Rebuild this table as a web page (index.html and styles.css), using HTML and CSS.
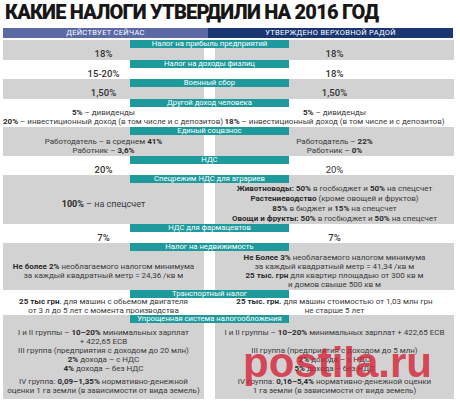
FILE: index.html
```html
<!DOCTYPE html>
<html lang="ru">
<head>
<meta charset="utf-8">
<title>Какие налоги утвердили на 2016 год</title>
<link rel="stylesheet" href="styles.css">
</head>
<body>
<div class="page">
  <h1 class="title">КАКИЕ НАЛОГИ УТВЕРДИЛИ НА 2016 ГОД</h1>
  <div class="head">
    <div class="head-now">ДЕЙСТВУЕТ СЕЙЧАС</div>
    <div class="head-rada">УТВЕРЖДЕНО ВЕРХОВНОЙ РАДОЙ</div>
  </div>

  <section class="row gray single pb1">
    <div class="label">Налог на прибыль предприятий</div>
    <div class="cell now"><div class="val">18%</div></div>
    <div class="cell rada"><div class="val">18%</div></div>
  </section>

  <section class="row single">
    <div class="label">Налог на доходы физлиц</div>
    <div class="cell now"><div class="val">15-20%</div></div>
    <div class="cell rada"><div class="val">18%</div></div>
  </section>

  <section class="row gray single pb1">
    <div class="label">Военный сбор</div>
    <div class="cell now"><div class="val">1,50%</div></div>
    <div class="cell rada"><div class="val">1,50%</div></div>
  </section>

  <section class="row r4">
    <div class="label">Другой доход человека</div>
    <div class="cell now txt">
      <div><b>5%</b> – дивиденды</div>
      <div><b>20%</b> – инвестиционный доход (в том числе и с депозитов)</div>
    </div>
    <div class="cell rada txt">
      <div><b>5%</b> – дивиденды</div>
      <div><b>18%</b> – инвестиционный доход (в том числе и с депозитов)</div>
    </div>
  </section>

  <section class="row gray r5">
    <div class="label">Единый соцвзнос</div>
    <div class="cell now txt">
      <div>Работодатель – в среднем <b>41%</b></div>
      <div>Работник – <b>3,6%</b></div>
    </div>
    <div class="cell rada txt">
      <div>Работодатель – <b>22%</b></div>
      <div>Работник – <b>0%</b></div>
    </div>
  </section>

  <section class="row single">
    <div class="label">НДС</div>
    <div class="cell now"><div class="val">20%</div></div>
    <div class="cell rada"><div class="val light">20%</div></div>
  </section>

  <section class="row gray r7">
    <div class="label">Спецрежим НДС для аграриев</div>
    <div class="cell now txt big"><div><b>100%</b> – на спецсчет</div></div>
    <div class="cell rada txt">
      <div><b>Животноводы:</b> <b>50%</b> в госбюджет и <b>50%</b> на спецсчет</div>
      <div><b>Растениеводство</b> (кроме овощей и фруктов)</div>
      <div><b>85%</b> в бюджет и <b>15%</b> на спецсчет</div>
      <div><b>Овощи и фрукты:</b> <b>50%</b> в госбюджет и <b>50%</b> на спецсчет</div>
    </div>
  </section>

  <section class="row single">
    <div class="label">НДС для фармацевтов</div>
    <div class="cell now"><div class="val">7%</div></div>
    <div class="cell rada"><div class="val">7%</div></div>
  </section>

  <section class="row gray r9">
    <div class="label">Налог на недвижимость</div>
    <div class="cell now txt">
      <div><b>Не более 2%</b> необлагаемого налогом минимума</div>
      <div>за каждый квадратный метр = 24,36 /кв м</div>
    </div>
    <div class="cell rada txt">
      <div><b>Не Более 3%</b> необлагаемого налогом минимума</div>
      <div>за каждый квадратный метр = 41,34 /кв м</div>
      <div><b>25 тыс. грн</b> для квартир площадью от 300 кв м</div>
      <div>и домов свыше 500 кв м</div>
    </div>
  </section>

  <section class="row r10">
    <div class="label">Транспортный налог</div>
    <div class="cell now txt">
      <div><b>25 тыс грн</b>. для машин с обьемом двигателя</div>
      <div>от 3 л до 5 лет с момента производства</div>
    </div>
    <div class="cell rada txt">
      <div><b>25 тыс. грн.</b> для машин стоимостью от 1,03 млн грн</div>
      <div>не старше 5 лет</div>
    </div>
  </section>

  <section class="row gray r11">
    <div class="label">Упрощенная система налогообложения</div>
    <div class="cell now txt">
      <div class="grp1">
        <div>I и II группы – <b>10–20%</b> минимальных зарплат</div>
        <div>+ 422,65 ЕСВ</div>
      </div>
      <div>III группа (предприятия с доходом до 20 млн)</div>
      <div><b>2%</b> дохода – с НДС</div>
      <div><b>4%</b> дохода – без НДС</div>
      <div class="grp4">
        <div>IV группа: <b>0,09–1,35%</b> нормативно-денежной</div>
        <div>оценки 1 га земли (в зависимости от вида земель)</div>
      </div>
    </div>
    <div class="cell rada txt">
      <div class="grp1">
        <div>I и II группы – <b>10–20%</b> минимальных зарплат + 422,65 ЕСВ</div>
      </div>
      <div>III группа (предприятия с доходом до 5 млн)</div>
      <div><b>2%</b> дохода – с НДС</div>
      <div><b>5%</b> дохода – без НДС</div>
      <div class="grp4">
        <div>IV группа: <b>0,16–5,4%</b> нормативно-денежной оценки</div>
        <div>1 га земли (в зависимости от вида земель)</div>
      </div>
    </div>
  </section>
</div>
<div class="watermark">postila.ru</div>
</body>
</html>
```

FILE: styles.css
```css
html, body {
  margin: 0;
  padding: 0;
  background: #ffffff;
}

body {
  width: 460px;
  height: 407px;
  overflow: hidden;
  font-family: Roboto, "Noto Sans", "Liberation Sans", sans-serif;
  color: #343434;
}

.page {
  padding: 0 6px 0 3px;
}

.title {
  margin: 0;
  padding: 0 0 4px 2px;
  font-size: 20px;
  line-height: 24px;
  font-weight: 900;
  letter-spacing: -0.8px;
  color: #171717;
  white-space: nowrap;
}

.head {
  display: flex;
  height: 10px;
  margin-bottom: 2px;
  color: #ffffff;
  font-size: 7.5px;
  line-height: 10px;
  letter-spacing: 0.3px;
  text-align: center;
}

.head-now {
  width: 205px;
  background: #5b69a7;
}

.head-rada {
  width: 245px;
  background: #1b3773;
}

.row {
  display: grid;
  grid-template-columns: 201px 239px;
  grid-template-rows: 8px auto;
  column-gap: 11px;
}

.label {
  grid-column: 1 / 3;
  grid-row: 1;
  justify-self: start;
  margin-left: 127px;
  width: 159px;
  height: 8px;
  background: #1e9a9c;
  color: #ffffff;
  font-size: 7.7px;
  line-height: 8px;
  text-align: center;
  white-space: nowrap;
  z-index: 1;
}

.cell {
  grid-row: 1 / 3;
  padding-top: 8px;
  display: flex;
  flex-direction: column;
  justify-content: center;
  text-align: center;
  white-space: nowrap;
}

.cell.now {
  grid-column: 1;
}

.cell.rada {
  grid-column: 2;
}

.gray .cell {
  background: #d2d2d2;
}

.val {
  font-size: 9.5px;
  line-height: 11px;
  font-weight: 500;
  color: #333333;
}

.val.light {
  font-weight: 400;
}

.txt {
  font-size: 8px;
  line-height: 9px;
  color: #3a3a3a;
}

.txt b {
  font-weight: 700;
  color: #2a2a2a;
}

.txt.big {
  font-size: 9px;
}

.pb1 .cell {
  padding-bottom: 1px;
}

.r4 .cell {
  padding-top: 9px;
  padding-bottom: 1px;
}

.r5 .cell {
  padding-top: 10px;
  padding-bottom: 1px;
}

.r7 .cell {
  padding-top: 9px;
}

.r7 .txt {
  line-height: 10px;
}

.r9 .cell {
  padding-top: 10px;
  padding-bottom: 1px;
}

.r10 .txt {
  line-height: 8.5px;
}

.r10 .cell {
  justify-content: flex-start;
}

.r11 .cell {
  padding-top: 13px;
  padding-bottom: 4px;
  justify-content: flex-start;
}

.r11 .grp1 {
  min-height: 18px;
}

.r11 .grp4 {
  margin-top: 4px;
}

.watermark {
  position: absolute;
  left: 243px;
  top: 342px;
  font-family: "Liberation Sans", Arial, sans-serif;
  font-size: 42px;
  line-height: 42px;
  font-weight: 700;
  color: rgba(214, 32, 52, 0.8);
  white-space: nowrap;
}
```
